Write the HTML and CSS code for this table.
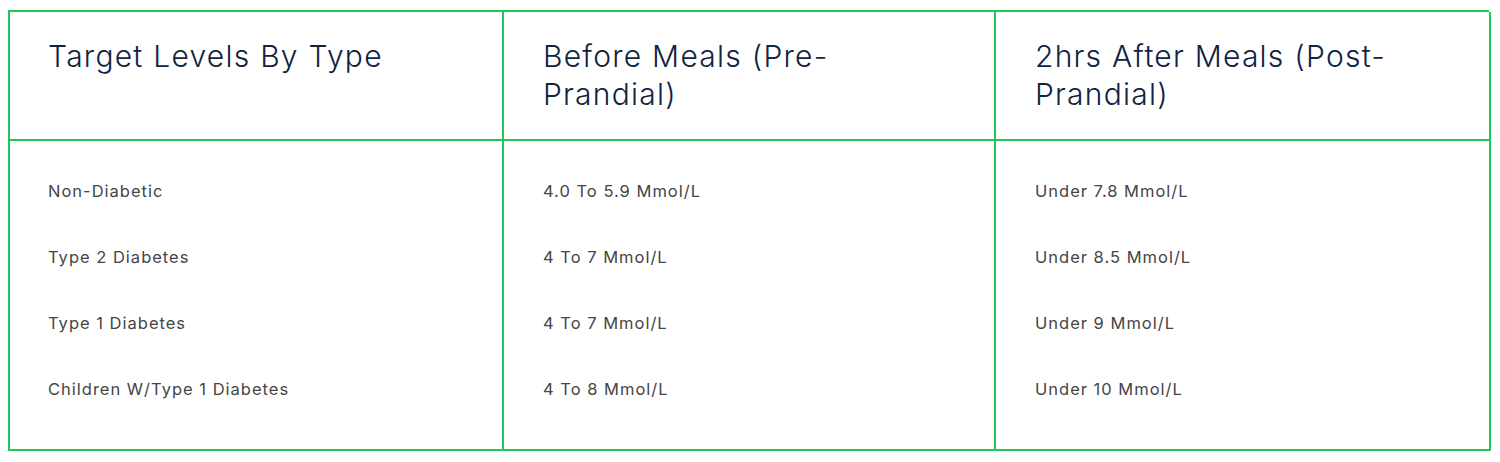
FILE: index.html
```html
<!DOCTYPE html>
<html>
<head>
<meta charset="utf-8">
<link rel="stylesheet" href="styles.css">
</head>
<body>
<div class="table">
  <div class="cell head">Target Levels By Type</div>
  <div class="cell head">Before Meals (Pre-Prandial)</div>
  <div class="cell head">2hrs After Meals (Post-Prandial)</div>
  <div class="cell body">
    <div class="item">Non-Diabetic</div>
    <div class="item">Type 2 Diabetes</div>
    <div class="item">Type 1 Diabetes</div>
    <div class="item">Children W/Type 1 Diabetes</div>
  </div>
  <div class="cell body">
    <div class="item">4.0 To 5.9 Mmol/L</div>
    <div class="item">4 To 7 Mmol/L</div>
    <div class="item">4 To 7 Mmol/L</div>
    <div class="item">4 To 8 Mmol/L</div>
  </div>
  <div class="cell body">
    <div class="item">Under 7.8 Mmol/L</div>
    <div class="item">Under 8.5 Mmol/L</div>
    <div class="item">Under 9 Mmol/L</div>
    <div class="item">Under 10 Mmol/L</div>
  </div>
</div>
</body>
</html>
```

FILE: styles.css
```css
html, body {
  margin: 0;
  padding: 0;
  background: #ffffff;
}
body {
  padding: 10px 10px 0 8px;
  font-family: Inter, "Noto Sans", sans-serif;
}
.table {
  width: 1481px;
  display: grid;
  grid-template-columns: 494px 492px 495px;
  border-top: 2px solid #22c55a;
  border-left: 2px solid #22c55a;
  box-sizing: border-box;
}
.cell {
  border-right: 2px solid #22c55a;
  border-bottom: 2px solid #22c55a;
  box-sizing: border-box;
}
.head {
  height: 129px;
  padding: 25px 70px 0 38px;
  font-size: 30px;
  font-weight: 300;
  line-height: 38px;
  letter-spacing: 1.25px;
  color: #10233f;
}
.cell.head:nth-child(n+2), .cell.body:nth-child(n+5) {
  padding-left: 39px;
}
.body {
  height: 310px;
  padding: 38px 38px 0 38px;
  display: flex;
  flex-direction: column;
  gap: 42px;
}
.item {
  font-size: 16.5px;
  line-height: 24px;
  letter-spacing: 1px;
  color: #454545;
}
```
